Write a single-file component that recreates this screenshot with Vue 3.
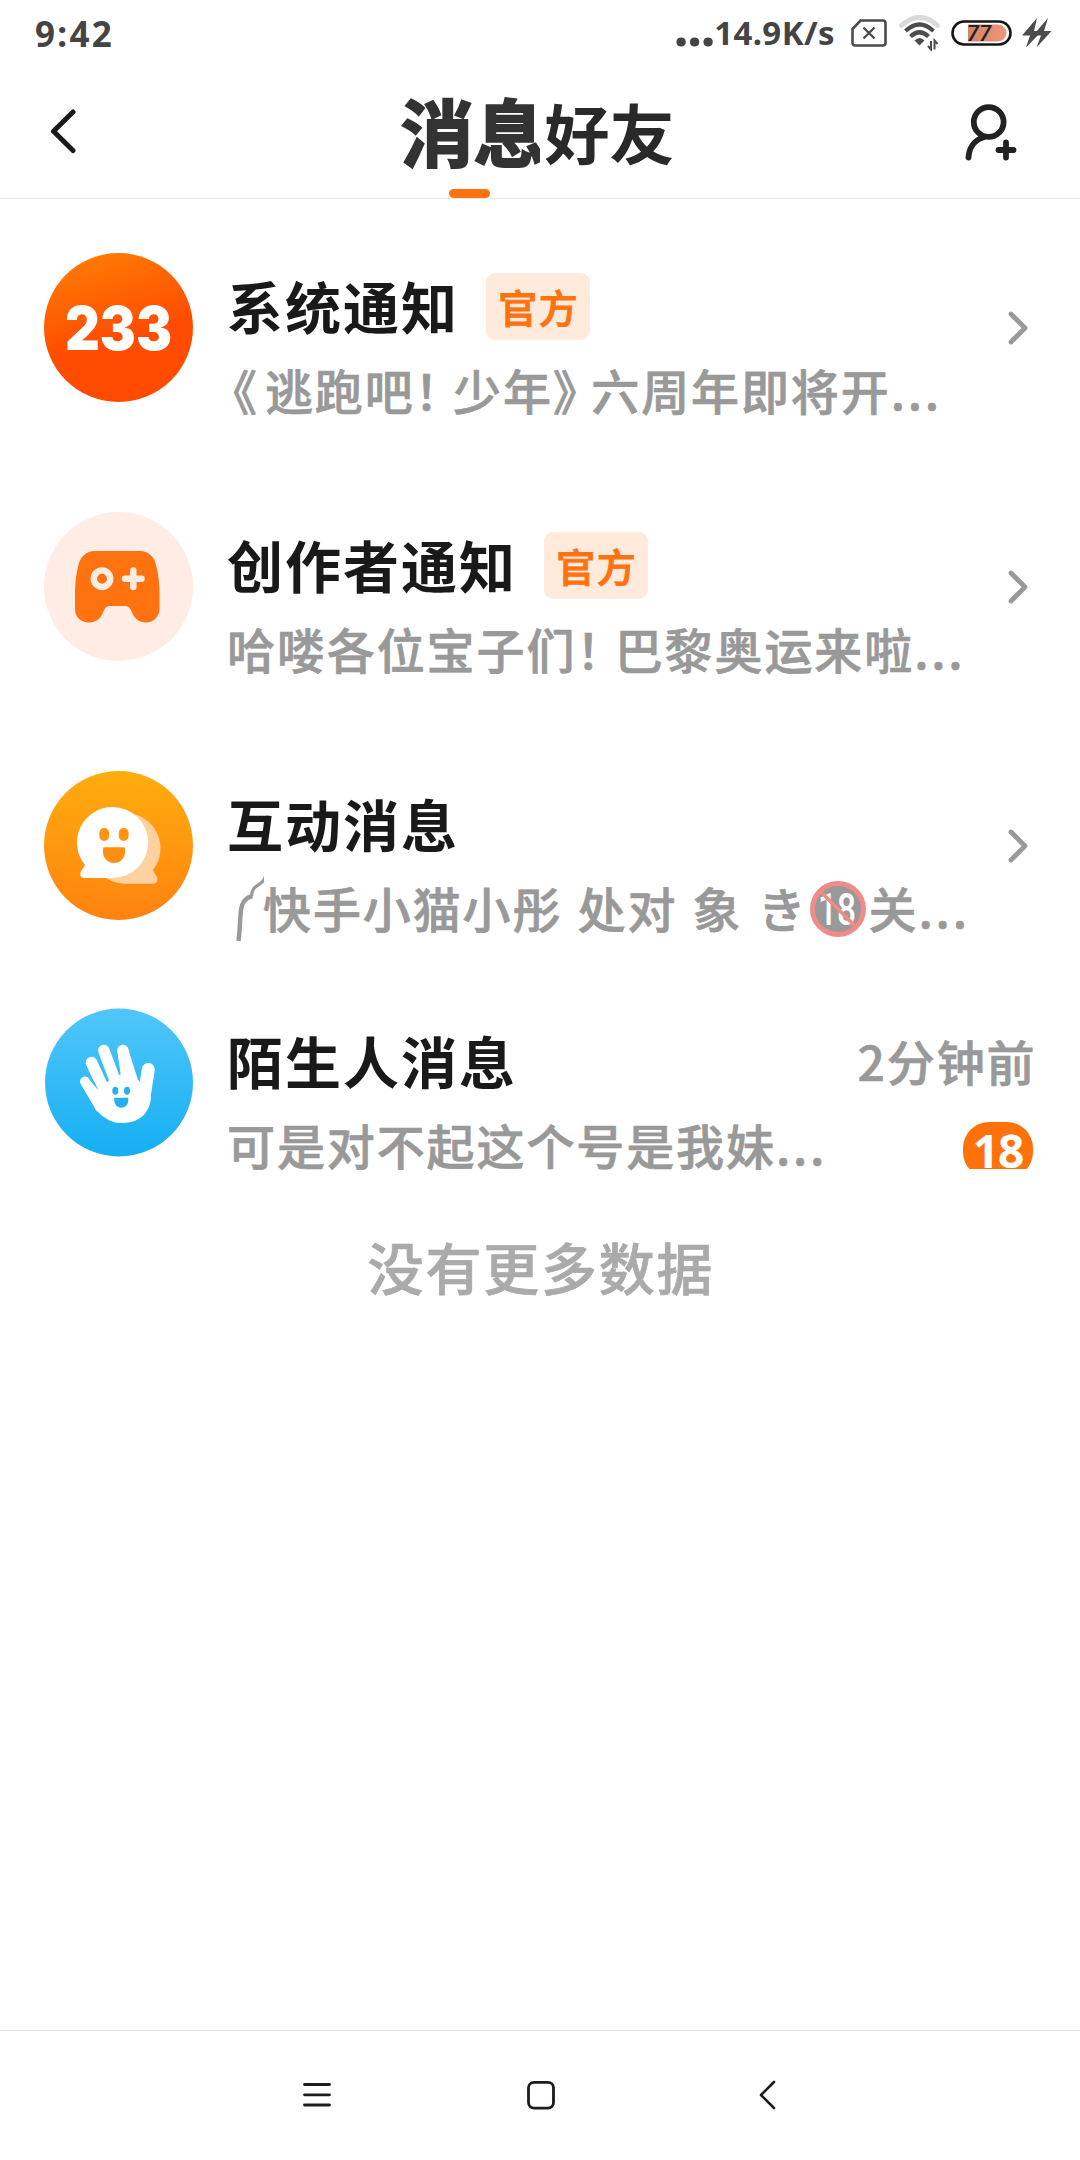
<script setup>
const rows = [
  {
    id: 'system', title: '系统通知', official: true, arrow: true,
    preview: [
      { t: '《', c: 'open' }, { t: '逃跑吧' }, { t: '！', c: 'close' },
      { t: '少年' }, { t: '》', c: 'close' }, { t: '六周年即将开' }, { t: '...', c: 'dots' },
    ],
  },
  {
    id: 'creator', title: '创作者通知', official: true, arrow: true,
    preview: [
      { t: '哈喽各位宝子们' }, { t: '！', c: 'close' }, { t: '巴黎奥运来啦' }, { t: '...', c: 'dots' },
    ],
  },
  {
    id: 'interact', title: '互动消息', arrow: true,
    preview: [
      { icon: 'curl' }, { t: '快手小猫小彤 处对 象 き' }, { icon: 'adult' },
      { t: '关' }, { t: '...', c: 'dots' },
    ],
  },
  {
    id: 'stranger', title: '陌生人消息', time: '2分钟前', badge: '18',
    preview: [{ t: '可是对不起这个号是我妹' }, { t: '...', c: 'dots' }],
  },
]
</script>

<template>
  <div class="screen">
    <div class="status">
      <span class="clock">9:42</span>
      <div class="status-right">
        <span class="wait">...</span><span class="speed">14.9K/s</span>
        <svg class="sim" width="36" height="28" viewBox="0 0 36 28" fill="none" stroke="#4c4c4c">
          <path d="M9.5 1.5H32a2.5 2.5 0 0 1 2.5 2.5v20a2.5 2.5 0 0 1-2.5 2.5H4A2.5 2.5 0 0 1 1.500 24V10z" stroke-width="2.6" />
          <path d="M12.500 8.500l11 11M23.500 8.500l-11 11" stroke-width="2.4" />
        </svg>
        <svg class="wifi" width="42" height="36" viewBox="0 0 42 36" fill="none">
          <path d="M2.500 10.500Q20.500-5.500 38.500 10.500" stroke="#dadada" stroke-width="5" stroke-linecap="round" />
          <path d="M6.500 16Q20.500 3 34.500 16" stroke="#4c4c4c" stroke-width="4.200" />
          <path d="M11.500 21.500Q20.500 13 29.500 21.500" stroke="#4c4c4c" stroke-width="4.200" />
          <path d="M15.500 25.500Q20.500 20.500 25.500 25.500L20.500 30.500z" fill="#4c4c4c" />
          <path d="M32 26v8.500l-3-3.500M35.500 34.500V25.500l3 3.500" stroke="#4c4c4c" stroke-width="2" />
        </svg>
        <svg class="battery" width="61" height="26" viewBox="0 0 61 26">
          <defs>
            <linearGradient id="bat"><stop offset="0" stop-color="#cf8468" /><stop offset="1" stop-color="#f0957a" /></linearGradient>
          </defs>
          <rect x="1.500" y="1.500" width="58" height="23" rx="11.500" fill="#fff" stroke="#161616" stroke-width="2.600" />
          <path d="M17 4.500h30a8.500 8.500 0 0 1 0 17H17z" fill="url(#bat)" />
          <text x="28" y="20.500" text-anchor="middle" font-family="Roboto, sans-serif" font-size="22" font-weight="500" font-style="italic" fill="#222">77</text>
        </svg>
        <svg class="bolt" width="30" height="30" viewBox="0 0 30 30" fill="#4c4c4c">
          <path d="M15 0L0 17.500h8L4 29.500 20 13h-8z" />
          <path d="M26 0L11 17.500h8l-4.500 12L29.500 13H22z" />
        </svg>
      </div>
    </div>

    <header class="header">
      <svg class="back" width="30" height="46" viewBox="0 0 30 46" fill="none" stroke="#1a1a1a" stroke-width="5" stroke-linecap="round" stroke-linejoin="round">
        <path d="M24 4L4.500 23.300 24 42.500" />
      </svg>
      <div class="tabs">
        <div class="tab active"><span>消息</span></div>
        <div class="tab"><span>好友</span></div>
      </div>
      <svg class="add" width="54" height="60" viewBox="0 0 54 60" fill="none" stroke="#222" stroke-width="5.800" stroke-linecap="round">
        <circle cx="24.700" cy="20" r="14.900" />
        <path d="M19 35.500C9.500 38.500 5 47 4.500 55.500M34.500 48h15M42 40.500v15" />
      </svg>
    </header>

    <main class="list">
      <div v-for="row in rows" :key="row.id" class="row" :class="row.id">
        <svg class="avatar" viewBox="0 0 149 149">
          <template v-if="row.id === 'system'">
            <defs>
              <linearGradient id="g1" x1="0.2" y1="0" x2="0.5" y2="1">
                <stop offset="0" stop-color="#ff7d05" /><stop offset="0.600" stop-color="#ff4d00" /><stop offset="1" stop-color="#ff4a00" />
              </linearGradient>
            </defs>
            <circle cx="74.500" cy="74.500" r="74.500" fill="url(#g1)" />
            <text x="21" y="96.500" textLength="107" lengthAdjust="spacingAndGlyphs" font-family="Inter, sans-serif" font-size="61" font-weight="900" fill="#fff">233</text>
          </template>
          <template v-else-if="row.id === 'creator'">
            <circle cx="74.500" cy="74.500" r="74.500" fill="#ffece5" />
            <path d="M51 39H95C106 39 111 46 112.500 55Q115.500 67 115.500 82V97C115 105 109.500 110.500 102 110.500 95 110.500 91 107 88.500 101.500 86.500 96.500 85 94 81 94H66.500C62 94 60.500 96.500 58.500 101.500 56 107 52 110.500 45 110.500 37 110.500 31 105 31 97V82Q31 67 34 55C35.500 46 41 39 51 39z" fill="#ff720f" />
            <circle cx="58" cy="66.700" r="8.200" fill="none" stroke="#ffece0" stroke-width="6.500" />
            <path d="M81 66.700H97.500M89.300 58.500V75" stroke="#ffece0" stroke-width="6.500" stroke-linecap="round" />
          </template>
          <template v-else-if="row.id === 'interact'">
            <defs>
              <linearGradient id="g3" x1="0" y1="0" x2="0" y2="1">
                <stop offset="0" stop-color="#ffad0d" /><stop offset="1" stop-color="#ff8210" />
              </linearGradient>
            </defs>
            <circle cx="74.500" cy="74.500" r="74.500" fill="url(#g3)" />
            <path d="M81 42A35.300 35.300 0 0 1 109 99L113.300 107Q114.500 112.700 109 112.700H81A35.300 35.300 0 0 1 81 42z" fill="#ffd0a0" />
            <path d="M68.700 36A35.300 35.300 0 0 1 68.700 107H40Q35 106.500 36.500 101L41 94A35.500 35.500 0 0 1 68.700 36z" fill="#fff" />
            <rect x="55.300" y="57" width="9.800" height="13" rx="4.900" fill="#ff930d" />
            <rect x="74.800" y="57" width="9.800" height="13" rx="4.900" fill="#ff930d" />
            <path d="M60 76.300H80Q81 76.300 81 77.500V81A11 11 0 0 1 59 81V77.500Q59 76.300 60 76.300z" fill="#ff8f10" />
          </template>
          <template v-else>
            <defs>
              <linearGradient id="g4" x1="0" y1="0" x2="0" y2="1">
                <stop offset="0" stop-color="#50c6fa" /><stop offset="1" stop-color="#16aef3" />
              </linearGradient>
            </defs>
            <circle cx="75" cy="74.500" r="74" fill="url(#g4)" />
            <g stroke="#fff" stroke-linecap="round" fill="none">
              <path d="M41 73.500L56 99" stroke-width="10" />
              <path d="M47.500 54.500L61 84" stroke-width="11.500" />
              <path d="M59.800 42.500L74 80" stroke-width="11.500" />
              <path d="M79 42.500L84.500 80" stroke-width="11.500" />
              <path d="M104.300 61.500L100.500 86" stroke-width="13" />
            </g>
            <path d="M45 71L54.300 82 64.500 72.700 77.300 66 84.500 42 94 72 107 82 106.800 92C104 108 93 115 77 115 65 115 57 107 51.600 101.500z" fill="#fff" />
            <path d="M45.300 71.500L54.300 82 50 73z" fill="#38baf6" />
            <ellipse cx="71.300" cy="82.700" rx="3" ry="4" fill="#22b2f3" />
            <ellipse cx="83" cy="82.700" rx="3" ry="4" fill="#22b2f3" />
            <path d="M70.300 89.700H84.300V92.700A7 7 0 0 1 70.300 92.700z" fill="#22b2f3" />
          </template>
        </svg>

        <div class="body">
          <div class="line">
            <span class="title">{{ row.title }}</span>
            <span v-if="row.official" class="tag">官方</span>
            <span v-if="row.time" class="time">{{ row.time }}</span>
          </div>
          <div class="line second">
            <div class="preview">
              <template v-for="(p, i) in row.preview" :key="i">
                <svg v-if="p.icon === 'curl'" class="curl" width="37" height="70" viewBox="0 0 37 70" fill="none" stroke="#999" stroke-linecap="butt">
                  <path d="M38.500 2C36 13 25 9 24.500 22" stroke-width="3.200" />
                  <path d="M25.500 22C10 26 15 40 11.500 67" stroke-width="4.400" />
                </svg>
                <svg v-else-if="p.icon === 'adult'" class="adult" width="56" height="58" viewBox="0 0 56 58">
                  <circle cx="28" cy="29" r="25.500" fill="#999" stroke="#f08b89" stroke-width="5" />
                  <text x="27" y="45" text-anchor="middle" font-family="Roboto, sans-serif" font-size="45" textLength="38" lengthAdjust="spacingAndGlyphs" fill="#fff">18</text>
                  <path d="M10 11L46 47" stroke="#f08b89" stroke-width="3.500" />
                </svg>
                <span v-else :class="p.c">{{ p.t }}</span>
              </template>
            </div>
            <div v-if="row.badge" class="badge-clip"><span class="badge">{{ row.badge }}</span></div>
          </div>
        </div>

        <svg v-if="row.arrow" class="arrow" width="22" height="36" viewBox="0 0 22 36" fill="none" stroke="#999" stroke-width="4.800" stroke-linecap="round" stroke-linejoin="round">
          <path d="M4 4L18 18 4 32" />
        </svg>
      </div>
      <p class="end">没有更多数据</p>
    </main>

    <nav class="nav">
      <svg width="28" height="30" viewBox="0 0 28 30" stroke="#1c1c1c" stroke-width="2.800" stroke-linecap="round">
        <path d="M1.500 4.500h25M1.500 14.800h25M1.500 25h25" />
      </svg>
      <svg class="home" width="30" height="30" viewBox="0 0 30 30" fill="none" stroke="#1c1c1c" stroke-width="2.800">
        <rect x="2.500" y="2.300" width="25" height="25.800" rx="5.500" />
      </svg>
      <svg class="nav-back" width="18" height="30" viewBox="0 0 18 30" fill="none" stroke="#1c1c1c" stroke-width="2.600" stroke-linecap="round" stroke-linejoin="round">
        <path d="M15 2L2 15 15 28" />
      </svg>
    </nav>
  </div>
</template>

<style>
body { margin: 0; background: #fff; }
</style>

<style scoped>
.screen {
  width: 1080px;
  height: 2160px;
  display: flex;
  flex-direction: column;
  background: #fff;
  overflow: hidden;
  font-family: "Noto Sans CJK SC", sans-serif;
}
.screen svg { display: block; flex: none; }
.status {
  height: 66px;
  flex: none;
  display: flex;
  justify-content: space-between;
  padding: 0 28px 0 35px;
  color: #444;
  font-family: "Noto Sans", sans-serif;
  font-weight: 700;
}
.clock { font-size: 35px; line-height: 67px; letter-spacing: 2.300px; }
.status-right { display: flex; align-items: flex-start; }
.wait { font-size: 54px; line-height: 66px; height: 66px; margin-top: -8px; letter-spacing: -1.600px; }
.speed { font-size: 33px; line-height: 66px; letter-spacing: 0.400px; }
.sim { margin: 19px 0 0 16px; }
.wifi { margin: 15px 0 0 12px; }
.battery { margin: 20px 0 0 10px; }
.bolt { margin: 18px 0 0 10px; }

.header {
  height: 132px;
  flex: none;
  display: flex;
  justify-content: space-between;
  align-items: flex-start;
  border-bottom: 1px solid #ebebeb;
  padding: 0 62px 0 49px;
}
.back { margin-top: 42px; }
.add { margin-top: 36px; }
.tabs { display: flex; height: 132px; margin-left: 32px; }
.tab {
  display: flex;
  flex-direction: column;
  font-size: 65px;
  line-height: 131px;
  font-weight: 700;
  color: #292929;
  padding-left: 4px;
}
.tab.active {
  position: relative;
  width: 140px;
  padding: 0;
  overflow: hidden;
  font-size: 73px;
  line-height: 126px;
  color: #333;
  white-space: nowrap;
  -webkit-text-stroke: 2px #333;
}
.tab.active::after {
  content: "";
  position: absolute;
  left: 49px;
  bottom: 0;
  width: 41px;
  height: 9px;
  border-radius: 4.500px;
  background: #ff720f;
}

.list { flex: 1; margin-top: -1px; }
.row {
  height: 259px;
  display: flex;
  align-items: center;
  padding: 0 51px 0 44px;
  box-sizing: border-box;
}
.row.stranger { height: 215px; padding-right: 47px; }
.avatar { width: 149px; height: 149px; }
.body { flex: 1; height: 149px; margin-left: 34px; }
.line { display: flex; align-items: center; height: 67px; margin-top: 20px; }
.line.second { margin-top: 17px; height: 64px; }
.title { font-size: 56px; font-weight: 700; letter-spacing: 2px; color: #191919; line-height: 67px; margin-top: -5px; white-space: nowrap; }
.tag {
  margin-left: 27px;
  width: 104px;
  height: 67px;
  border-radius: 9px;
  background: #ffeadb;
  color: #ff720f;
  font-size: 39px;
  font-weight: 500;
  -webkit-text-stroke: 0.900px #ff720f;
  letter-spacing: 1.500px;
  text-indent: 1.500px;
  line-height: 67px;
  text-align: center;
}
.time {
  margin-left: auto;
  font-size: 48px;
  font-weight: 500;
  letter-spacing: 1.900px;
  color: #999;
  -webkit-text-stroke: 0.700px #999;
  margin-right: -3.500px;
  margin-top: -4px;
}
.preview {
  display: flex;
  align-items: center;
  font-size: 48px;
  font-weight: 500;
  letter-spacing: 1.900px;
  word-spacing: 2.500px;
  color: #999;
  -webkit-text-stroke: 0.700px #999;
  line-height: 62px;
  white-space: pre;
}
.preview svg { -webkit-text-stroke: 0; letter-spacing: 0; }
.curl { margin: 3px -1px 0 0; }
.open { font-feature-settings: "halt"; margin: 0 6px 0 6px; }
.close { font-feature-settings: "halt"; margin-right: 12.500px; }
.dots { letter-spacing: 2.800px; }
.adult { margin: 4px 3px 0 2px; }
.badge-clip { margin: 2px 0 0 auto; width: 70px; height: 47px; overflow: hidden; }
.badge {
  display: block;
  height: 56px;
  border-radius: 26px;
  background: #ff720a;
  color: #fff;
  font-family: "Noto Sans", sans-serif;
  font-size: 46px;
  font-weight: 700;
  line-height: 57px;
  letter-spacing: -1px;
  text-align: center;
}
.end {
  margin: 35px 0 0 2px;
  text-align: center;
  font-size: 56px;
  line-height: 82px;
  font-weight: 500;
  letter-spacing: 1.800px;
  color: #aaa;
  -webkit-text-stroke: 0.700px #aaa;
}

.nav {
  height: 130px;
  flex: none;
  border-top: 1px solid #e0e0e0;
  display: flex;
  align-items: center;
  padding: 0 303px 2px;
  box-sizing: border-box;
  justify-content: space-between;
}
.home { margin-right: 9px; }
</style>
